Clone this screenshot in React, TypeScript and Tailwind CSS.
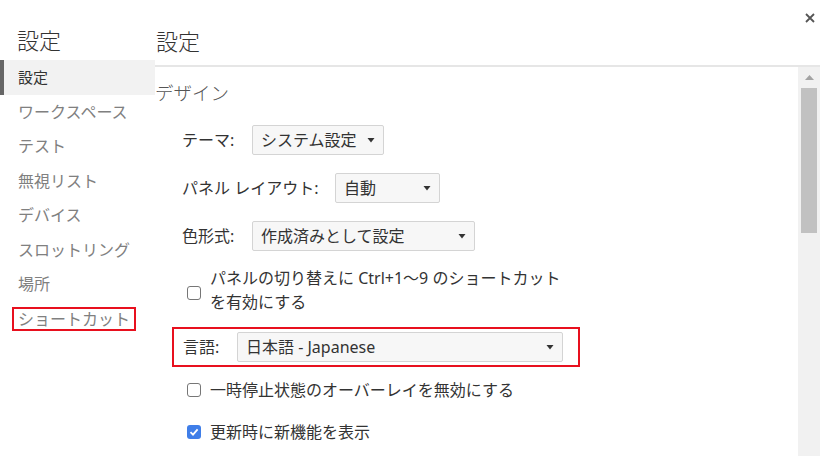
import React from "react";

const font = "font-['Noto_Sans','Noto_Sans_CJK_JP',sans-serif]";

function Select({ value, w }: { value: string; w: string }) {
  return (
    <div
      className={`${w} h-[30px] flex items-center justify-between pl-[8px] pr-[8px] bg-[#f7f7f7] border border-[#d4d4d4] rounded-[2px] text-[16px] text-[#333]`}
    >
      <span className="leading-none whitespace-nowrap">{value}</span>
      <svg width="8" height="5" viewBox="0 0 8 5">
        <path d="M0.5 0 L7.5 0 L4 4.5 Z" fill="#333" />
      </svg>
    </div>
  );
}

function Checkbox({ checked }: { checked?: boolean }) {
  if (checked) {
    return (
      <div className="w-[14px] h-[14px] rounded-[3px] bg-[#3f7ee8] flex items-center justify-center shrink-0">
        <svg width="10" height="10" viewBox="0 0 10 10">
          <path d="M1.5 5.2 L4 7.6 L8.6 2.4" stroke="white" strokeWidth="1.8" fill="none" />
        </svg>
      </div>
    );
  }
  return <div className="w-[14px] h-[14px] rounded-[3px] border border-[#767676] bg-white shrink-0" />;
}

export default function App() {
  const items = ["ワークスペース", "テスト", "無視リスト", "デバイス", "スロットリング", "場所"];
  return (
    <div className={`relative w-[820px] h-[456px] bg-white overflow-hidden flex ${font}`}>
      {/* Sidebar */}
      <div className="w-[155px] shrink-0 flex flex-col">
        <div className="h-[60px] pt-[23px] pl-[17px] text-[22px] leading-[34px] font-light text-[#333]">設定</div>
        <div className="h-[34.5px] flex items-center pl-[18px] bg-[#f2f2f2] border-l-4 border-[#666] text-[15px] text-[#333]">
          <span className="-ml-[4px]">設定</span>
        </div>
        {items.map((t) => (
          <div key={t} className="h-[34.5px] flex items-center pl-[18px] text-[16px] text-[#808080]">
            {t}
          </div>
        ))}
        <div className="h-[34.5px] flex items-center pl-[12px] text-[16px] text-[#808080]">
          <span className="border-2 border-[#e8101e] h-[24px] pl-[4px] pr-[4px] flex items-center leading-none">
            ショートカット
          </span>
        </div>
      </div>

      {/* Main */}
      <div className="flex-1 flex flex-col">
        <div className="h-[67px] shrink-0 border-b-2 border-[#e6e6e6] pl-[1px] pt-[24px] text-[22px] leading-[34px] font-light text-[#333]">
          設定
        </div>
        <div className="flex-1 flex">
          <div className="flex-1 flex flex-col pl-[17px]">
            <div className="-ml-[17px] mt-[13px] h-[26px] leading-[26px] text-[18.5px] font-light text-[#555]">デザイン</div>

            <div className="mt-[19px] ml-[10px] h-[30px] flex items-center text-[16px] text-[#333]">
              <span className="w-[70px]">テーマ:</span>
              <Select value="システム設定" w="w-[132px]" />
            </div>
            <div className="mt-[18px] ml-[10px] h-[30px] flex items-center text-[16px] text-[#333]">
              <span className="w-[153px]">パネル レイアウト:</span>
              <Select value="自動" w="w-[105px]" />
            </div>
            <div className="mt-[18px] ml-[10px] h-[30px] flex items-center text-[16px] text-[#333]">
              <span className="w-[70px]">色形式:</span>
              <Select value="作成済みとして設定" w="w-[223px]" />
            </div>

            <div className="mt-[15px] ml-[15px] flex items-center gap-[9px] text-[16px] leading-[24px] text-[#333]">
              <div className="mt-[6px]">
                <Checkbox />
              </div>
              <div className="whitespace-nowrap">
                パネルの切り替えに Ctrl+1～9 のショートカット
                <br />
                を有効にする
              </div>
            </div>

            <div className="mt-[13px] w-[408px] h-[40px] border-2 border-[#e8101e] flex items-center pl-[9px] text-[16px] text-[#333]">
              <span className="w-[54px]">言語:</span>
              <Select value="日本語 - Japanese" w="w-[326px]" />
            </div>

            <div className="mt-[11px] ml-[15px] h-[24px] flex items-center gap-[9px] text-[16px] text-[#333]">
              <Checkbox />
              <span>一時停止状態のオーバーレイを無効にする</span>
            </div>
            <div className="mt-[18px] ml-[15px] h-[24px] flex items-center gap-[9px] text-[16px] text-[#333]">
              <Checkbox checked />
              <span>更新時に新機能を表示</span>
            </div>
          </div>

          {/* Scrollbar */}
          <div className="w-[22px] shrink-0 bg-[#f1f1f1] flex flex-col items-center">
            <div className="h-[21px] flex items-center justify-center">
              <svg width="9" height="5" viewBox="0 0 9 5">
                <path d="M0 5 L4.5 0 L9 5 Z" fill="#a3a3a3" />
              </svg>
            </div>
            <div className="w-[16px] h-[145px] bg-[#c1c1c1]" />
          </div>
        </div>
      </div>

      {/* Close button */}
      <div className="absolute top-[13px] right-[5px] w-[10px] h-[10px]">
        <svg width="10" height="10" viewBox="0 0 10 10">
          <path d="M1 1 L9 9 M9 1 L1 9" stroke="#555" strokeWidth="1.8" />
        </svg>
      </div>
    </div>
  );
}
